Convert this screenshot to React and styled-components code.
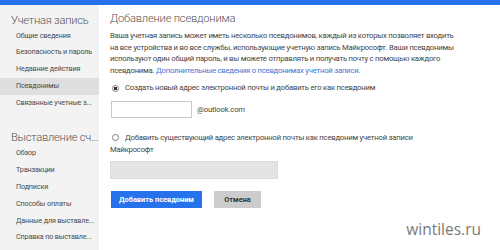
import React from "react";
import styled, { createGlobalStyle } from "styled-components";

const GlobalStyle = createGlobalStyle`
  html, body {
    margin: 0;
    padding: 0;
    background: #ffffff;
  }
  body {
    font-family: Roboto, "Noto Sans", sans-serif;
    color: #444444;
  }
`;

const accountItems = [
  "Общие сведения",
  "Безопасность и пароль",
  "Недавние действия",
  "Псевдонимы",
  "Связанные учетные з...",
];

const billingItems = [
  "Обзор",
  "Транзакции",
  "Подписки",
  "Способы оплаты",
  "Данные для выставле...",
  "Справка по выставле...",
];

function App() {
  return (
    <>
      <GlobalStyle />
      <Page>
        <TopBar />
        <Body>
          <Sidebar>
            <SideHeading>Учетная запись</SideHeading>
            {accountItems.map((item) => (
              <SideItem key={item} $active={item === "Псевдонимы"}>
                {item}
              </SideItem>
            ))}
            <SideHeading $spaced>Выставление сч...</SideHeading>
            {billingItems.map((item) => (
              <SideItem key={item}>{item}</SideItem>
            ))}
          </Sidebar>
          <Main>
            <Title>Добавление псевдонима</Title>
            <Paragraph>
              Ваша учетная запись может иметь несколько псевдонимов, каждый из
              которых позволяет входить
              <br />
              на все устройства и во все службы, использующие учетную запись
              Майкрософт. Ваши псевдонимы
              <br />
              используют один общий пароль, и вы можете отправлять и получать
              почту с помощью каждого
              <br />
              псевдонима.{" "}
              <Link>Дополнительные сведения о псевдонимах учетной записи.</Link>
            </Paragraph>
            <Option>
              <Radio $checked />
              Создать новый адрес электронной почты и добавить его как
              псевдоним
            </Option>
            <EmailRow>
              <TextBox />
              <Domain>@outlook.com</Domain>
            </EmailRow>
            <Option $top={14}>
              <Radio />
              Добавить существующий адрес электронной почты как псевдоним
              учетной записи
            </Option>
            <OptionTail>Майкрософт</OptionTail>
            <DisabledBox />
            <Buttons>
              <Button $primary>Добавить псевдоним</Button>
              <Button>Отмена</Button>
            </Buttons>
          </Main>
        </Body>
        <Watermark>wintiles.ru</Watermark>
      </Page>
    </>
  );
}

const Page = styled.div`
  position: relative;
  width: 500px;
  height: 250px;
  overflow: hidden;
  background: #ffffff;
`;

const TopBar = styled.div`
  height: 5px;
  background: #2672ec;
`;

const Body = styled.div`
  display: flex;
  height: 245px;
`;

const Sidebar = styled.nav`
  width: 99px;
  flex-shrink: 0;
  background: #f3f3f3;
  padding-top: 8.5px;
  box-sizing: border-box;
`;

const SideHeading = styled.div`
  font-weight: 300;
  font-size: 11.2px;
  letter-spacing: -0.25px;
  line-height: 14px;
  color: #555555;
  padding-left: 11px;
  white-space: nowrap;
  overflow: hidden;
  margin-top: ${(p) => (p.$spaced ? 19 : 0)}px;
`;

const SideItem = styled.div`
  font-size: 7.2px;
  letter-spacing: -0.15px;
  line-height: 16.9px;
  height: 16.9px;
  padding-left: 16px;
  color: #4a4a4a;
  white-space: nowrap;
  overflow: hidden;
  background: ${(p) => (p.$active ? "#dedede" : "transparent")};
`;

const Main = styled.main`
  flex: 1;
  padding: 6px 0 0 12px;
`;

const Title = styled.h1`
  margin: 0 0 3px -1px;
  font-weight: 300;
  font-size: 11.2px;
  letter-spacing: -0.2px;
  line-height: 16px;
  color: #555555;
  white-space: nowrap;
`;

const Paragraph = styled.p`
  margin: 0 0 0 -1px;
  font-size: 7.7px;
  letter-spacing: -0.22px;
  line-height: 11.7px;
  color: #444444;
  white-space: nowrap;
`;

const Link = styled.span`
  color: #3b77d8;
`;

const Option = styled.div`
  display: flex;
  align-items: center;
  margin-top: ${(p) => (p.$top ? p.$top : 5.5)}px;
  font-size: 7.7px;
  letter-spacing: -0.22px;
  line-height: 12px;
  color: #444444;
  white-space: nowrap;
`;

const Radio = styled.span`
  width: 7px;
  height: 7px;
  border: 1px solid #808080;
  border-radius: 50%;
  margin: 0 6px 0 1px;
  box-sizing: border-box;
  flex-shrink: 0;
  background: ${(p) =>
    p.$checked ? "radial-gradient(circle, #333 0 1.5px, #fff 2px)" : "#fff"};
`;

const OptionTail = styled.div`
  margin-left: -1px;
  font-size: 7.7px;
  letter-spacing: -0.22px;
  line-height: 11px;
  color: #444444;
`;

const EmailRow = styled.div`
  display: flex;
  align-items: center;
  gap: 5px;
  margin-top: 6.5px;
`;

const TextBox = styled.div`
  width: 81px;
  height: 17px;
  border: 1px solid #c8c8c8;
  box-sizing: border-box;
  background: #fff;
`;

const Domain = styled.span`
  font-size: 7.7px;
  letter-spacing: -0.15px;
  color: #444444;
`;

const DisabledBox = styled.div`
  width: 168px;
  height: 18px;
  margin: 6.5px 0 0 -1px;
  background: #e4e4e4;
  border: 1px solid #dcdcdc;
  box-sizing: border-box;
`;

const Buttons = styled.div`
  display: flex;
  gap: 12px;
  margin-top: 12px;
`;

const Button = styled.button`
  height: 16.5px;
  padding: 0;
  border: none;
  font-family: Roboto, "Noto Sans", sans-serif;
  font-weight: 700;
  font-size: 7.4px;
  white-space: nowrap;
  color: ${(p) => (p.$primary ? "#ffffff" : "#333333")};
  background: ${(p) => (p.$primary ? "#2672ec" : "#cccccc")};
  width: ${(p) => (p.$primary ? 91 : 47)}px;
`;

const Watermark = styled.div`
  position: absolute;
  right: 19px;
  bottom: 11px;
  font-family: "Open Sans", "Noto Sans", sans-serif;
  font-size: 15.5px;
  line-height: 20px;
  color: #7a7a7a;
`;

export default App;
